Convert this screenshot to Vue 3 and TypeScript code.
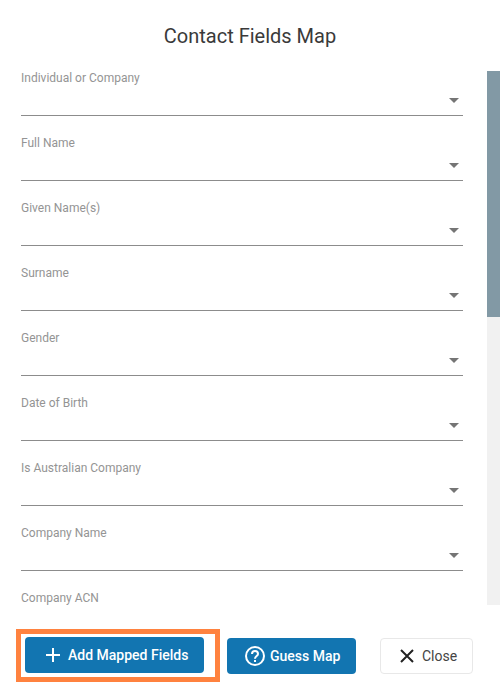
<script setup lang="ts">
import { ref } from 'vue'

interface ContactField {
  id: string
  label: string
  value: string
}

const labels: string[] = [
  'Individual or Company',
  'Full Name',
  'Given Name(s)',
  'Surname',
  'Gender',
  'Date of Birth',
  'Is Australian Company',
  'Company Name',
  'Company ACN',
]

const fields = ref<ContactField[]>(
  labels.map((label, index) => ({ id: `field-${index}`, label, value: '' })),
)
</script>

<template>
  <main class="dialog">
    <h1 class="title">Contact Fields Map</h1>

    <div class="body">
      <form class="fields">
        <div v-for="field in fields" :key="field.id" class="field">
          <label class="label" :for="field.id">{{ field.label }}</label>
          <div class="control">
            <select :id="field.id" v-model="field.value" class="select">
              <option value=""></option>
            </select>
            <svg class="arrow" viewBox="0 0 10 5" aria-hidden="true">
              <path d="M0 0h10L5 5z" fill="currentColor" />
            </svg>
          </div>
        </div>
      </form>
      <div class="track"><div class="thumb"></div></div>
    </div>

    <footer class="actions">
      <div class="highlight">
        <button type="button" class="button primary add">
          <svg class="icon" viewBox="0 0 20 20" aria-hidden="true">
            <path d="M10 3v14M3 10h14" fill="none" stroke="currentColor" stroke-width="2" />
          </svg>
          Add Mapped Fields
        </button>
      </div>
      <button type="button" class="button primary guess">
        <svg class="icon" viewBox="0 0 20 20" aria-hidden="true">
          <circle cx="10" cy="10" r="9" fill="none" stroke="currentColor" stroke-width="2" />
          <path
            d="M7 8a3 3 0 1 1 6 0c0 2-3 2.200-3 4.700"
            fill="none"
            stroke="currentColor"
            stroke-width="2"
          />
          <path d="M9 14h2v2H9z" fill="currentColor" />
        </svg>
        Guess Map
      </button>
      <button type="button" class="button close">
        <svg class="icon" viewBox="0 0 20 20" aria-hidden="true">
          <path d="M4 4l12 12M16 4L4 16" fill="none" stroke="#222" stroke-width="2" />
        </svg>
        Close
      </button>
    </footer>
  </main>
</template>

<style>
body {
  margin: 0;
  background: #fff;
}
</style>

<style scoped>
.dialog {
  box-sizing: border-box;
  display: flex;
  flex-direction: column;
  height: 100vh;
  font-family: Roboto, 'Liberation Sans', sans-serif;
  color: #3a3a3a;
}

.title {
  margin: 0;
  padding: 24px 0 23px;
  font-size: 20px;
  line-height: 24px;
  font-weight: 400;
  text-align: center;
}

.body {
  display: flex;
  flex: 1;
  min-height: 0;
  overflow: hidden;
}

.fields {
  flex: 1;
  padding: 0 24px 0 21px;
}

.field {
  margin-bottom: 20px;
}

.label {
  display: block;
  font-size: 12px;
  line-height: 14px;
  color: #949494;
}

.control {
  display: flex;
  align-items: center;
  position: relative;
}

.select {
  box-sizing: border-box;
  width: 100%;
  height: 31px;
  margin: 0;
  padding: 0 20px 0 0;
  border: 0;
  border-bottom: 1px solid #8c8c8c;
  border-radius: 0;
  background: transparent;
  appearance: none;
  font: inherit;
  font-size: 14px;
  color: inherit;
}

.arrow {
  position: absolute;
  right: 4px;
  width: 10px;
  height: 5px;
  color: #757575;
  pointer-events: none;
}

.track {
  width: 13px;
  background: #f1f1f1;
}

.thumb {
  height: 46%;
  background: #8299a5;
}

.actions {
  display: flex;
  align-items: center;
  padding: 24px 27px 12px 16px;
}

.highlight {
  padding: 3px 11px 4px 4px;
  border: 5px solid #ff823f;
}

.button {
  box-sizing: border-box;
  display: flex;
  align-items: center;
  gap: 5px;
  height: 36px;
  padding: 0 0 0 18px;
  border: 0;
  border-radius: 4px;
  font: inherit;
  font-size: 14px;
  white-space: nowrap;
}

.primary {
  background: #1275b1;
  color: #fff;
  font-weight: 500;
}

.add {
  width: 179px;
}

.guess {
  width: 129px;
  margin-left: 7px;
}

.close {
  width: 93px;
  margin-left: auto;
  padding-left: 16px;
  border: 1px solid #e8e8e8;
  background: #fff;
  color: #444;
}

.icon {
  flex: none;
  width: 20px;
  height: 20px;
}
</style>
